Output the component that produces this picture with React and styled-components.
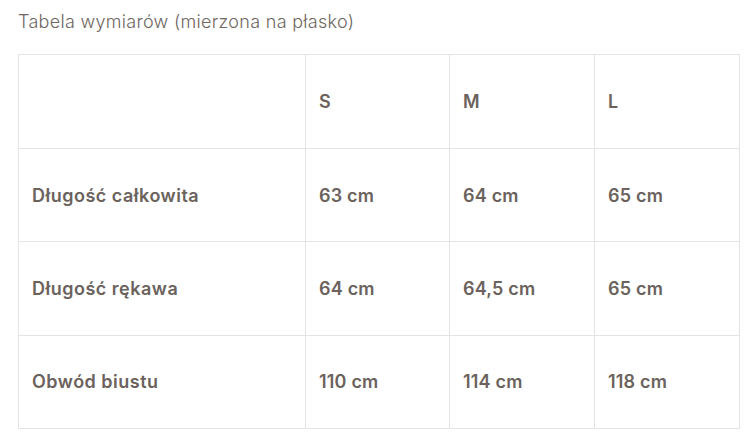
import styled, { createGlobalStyle } from 'styled-components';

const GlobalStyle = createGlobalStyle`
    body {
        margin: 0;
        background: #ffffff;
        font-family: Inter, "Noto Sans", sans-serif;
    }
`

const Wrapper = styled.div`
    padding: 9px 11px 0 18px;
`

const Title = styled.h2`
    margin: 0 0 19px;
    font-size: 18px;
    font-weight: 300;
    line-height: 26px;
    color: #6e6661;
    letter-spacing: 0.3px;
`

const SizeTable = styled.table`
    width: 721px;
    border-collapse: collapse;
    table-layout: fixed;
    border: 1px solid #e4e4e4;
`

const Col = styled.col`
    width: ${props => props.width}px;
`

const Cell = styled.td`
    height: ${props => props.$tall ? 93 : 92.3}px;
    padding: 0 13px;
    border: 1px solid #e4e4e4;
    font-size: 18px;
    font-weight: 600;
    color: #6b625d;
    letter-spacing: ${props => props.$label ? 0.5 : 0.2}px;
    vertical-align: middle;
    text-align: left;
    white-space: nowrap;
`

const sizes = ['S', 'M', 'L'];

const rows = [
    { label: 'Długość całkowita', values: ['63 cm', '64 cm', '65 cm'] },
    { label: 'Długość rękawa', values: ['64 cm', '64,5 cm', '65 cm'] },
    { label: 'Obwód biustu', values: ['110 cm', '114 cm', '118 cm'] },
];

const App = () => {
    return (
        <Wrapper>
            <GlobalStyle />
            <Title>Tabela wymiarów (mierzona na płasko)</Title>
            <SizeTable>
                <colgroup>
                    <Col width={287} />
                    <Col width={144} />
                    <Col width={145} />
                    <Col width={145} />
                </colgroup>
                <tbody>
                    <tr>
                        <Cell $tall></Cell>
                        {sizes.map(size => (
                            <Cell key={size} $tall>{size}</Cell>
                        ))}
                    </tr>
                    {rows.map(row => (
                        <tr key={row.label}>
                            <Cell $label>{row.label}</Cell>
                            {row.values.map((value, i) => (
                                <Cell key={i}>{value}</Cell>
                            ))}
                        </tr>
                    ))}
                </tbody>
            </SizeTable>
        </Wrapper>
    )
}

export default App;
